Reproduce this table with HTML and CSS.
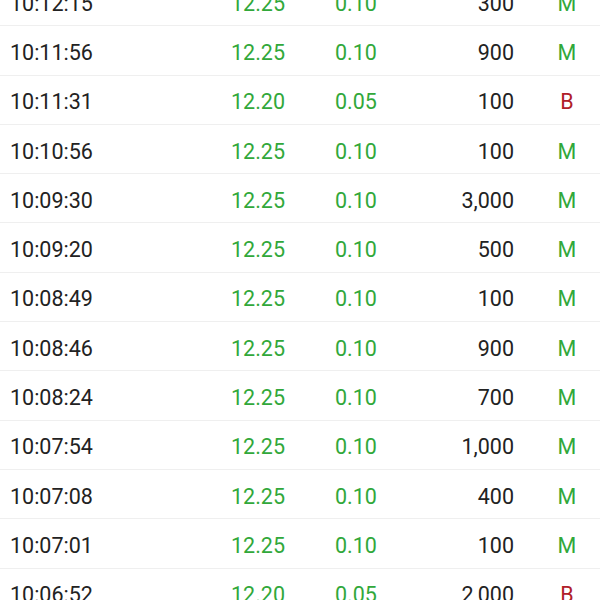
FILE: index.html
```html
<!DOCTYPE html>
<html>
<head>
<meta charset="utf-8">
<link rel="stylesheet" href="styles.css">
</head>
<body>
<div class="list">
  <div class="row"><span class="time">10:12:15</span><span class="price up">12.25</span><span class="chg up">0.10</span><span class="vol">300</span><span class="side m">M</span></div>
  <div class="row"><span class="time">10:11:56</span><span class="price up">12.25</span><span class="chg up">0.10</span><span class="vol">900</span><span class="side m">M</span></div>
  <div class="row"><span class="time">10:11:31</span><span class="price up">12.20</span><span class="chg up">0.05</span><span class="vol">100</span><span class="side b">B</span></div>
  <div class="row"><span class="time">10:10:56</span><span class="price up">12.25</span><span class="chg up">0.10</span><span class="vol">100</span><span class="side m">M</span></div>
  <div class="row"><span class="time">10:09:30</span><span class="price up">12.25</span><span class="chg up">0.10</span><span class="vol">3,000</span><span class="side m">M</span></div>
  <div class="row"><span class="time">10:09:20</span><span class="price up">12.25</span><span class="chg up">0.10</span><span class="vol">500</span><span class="side m">M</span></div>
  <div class="row"><span class="time">10:08:49</span><span class="price up">12.25</span><span class="chg up">0.10</span><span class="vol">100</span><span class="side m">M</span></div>
  <div class="row"><span class="time">10:08:46</span><span class="price up">12.25</span><span class="chg up">0.10</span><span class="vol">900</span><span class="side m">M</span></div>
  <div class="row"><span class="time">10:08:24</span><span class="price up">12.25</span><span class="chg up">0.10</span><span class="vol">700</span><span class="side m">M</span></div>
  <div class="row"><span class="time">10:07:54</span><span class="price up">12.25</span><span class="chg up">0.10</span><span class="vol">1,000</span><span class="side m">M</span></div>
  <div class="row"><span class="time">10:07:08</span><span class="price up">12.25</span><span class="chg up">0.10</span><span class="vol">400</span><span class="side m">M</span></div>
  <div class="row"><span class="time">10:07:01</span><span class="price up">12.25</span><span class="chg up">0.10</span><span class="vol">100</span><span class="side m">M</span></div>
  <div class="row"><span class="time">10:06:52</span><span class="price up">12.20</span><span class="chg up">0.05</span><span class="vol">2,000</span><span class="side b">B</span></div>
</div>
</body>
</html>
```
FILE: styles.css
```css
html, body {
  margin: 0;
  padding: 0;
  background: #ffffff;
  overflow: hidden;
}
.list {
  margin-top: -23px;
  font-family: Roboto, "Noto Sans", sans-serif;
  font-size: 21.5px;
  color: #222222;
}
.row {
  display: grid;
  grid-template-columns: 180px 95px 115px 114px 20px 66px;
  padding-left: 10px;
  padding-top: 4px;
  height: 44.3px;
  align-items: center;
  border-bottom: 1px solid #efefef;
  box-sizing: content-box;
}
.time { grid-column: 1; }
.price { grid-column: 2; text-align: right; }
.chg { grid-column: 3; padding-left: 50px; }
.vol { grid-column: 4; text-align: right; }
.side { grid-column: 6; text-align: center; }
.up { color: #31a83a; }
.m { color: #31a83a; }
.b { color: #b02028; }
```
